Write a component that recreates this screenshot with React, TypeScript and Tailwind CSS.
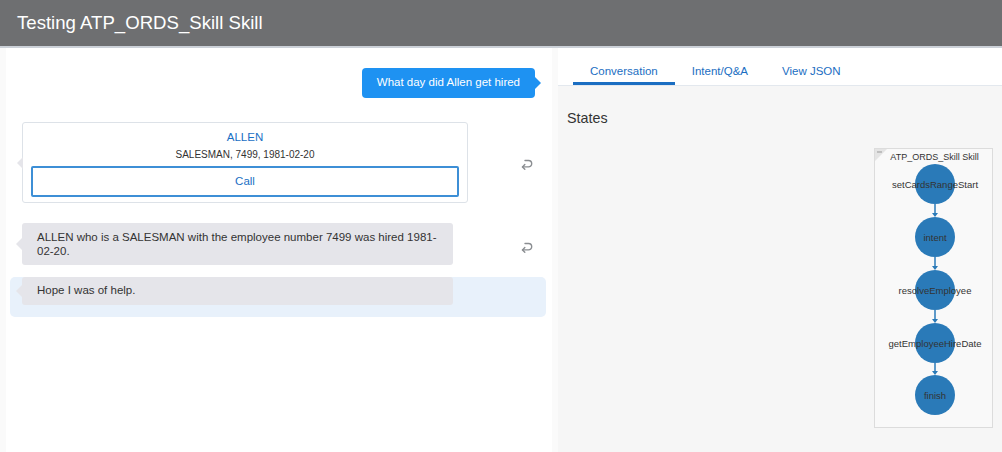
import React from "react";

function ReplayIcon() {
  return (
    <svg width="14" height="12" viewBox="0 0 14 12" fill="none" stroke="#8a8d91" strokeWidth="1.4" strokeLinecap="round" strokeLinejoin="round">
      <path d="M5 2.5 H8.5 A3.2 3.2 0 0 1 8.5 8.9 H2.5" />
      <path d="M4.8 6.6 L2.5 8.9 L4.8 11.2" />
    </svg>
  );
}

function LeftArrow({ color }: { color: string }) {
  return (
    <span
      className="absolute left-[-6px] top-1/2 -translate-y-1/2 w-0 h-0 border-y-[6px] border-y-transparent border-r-[6px]"
      style={{ borderRightColor: color }}
    />
  );
}

const nodes = ["setCardsRangeStart", "intent", "resolveEmployee", "getEmployeeHireDate", "finish"];
const ys = [35, 88, 141, 194, 246];

function Graph() {
  return (
    <div className="relative w-[119px] h-[280px] border border-[#dcdcdc] bg-[#f9f9f9]">
      <svg width="119" height="280" className="absolute left-0 top-0 overflow-visible">
        <path d="M0 0 H12 L0 12 Z" fill="#e4e4e4" />
        <line x1="2" y1="3" x2="7" y2="3" stroke="#999" strokeWidth="1" />
        <text x="59.5" y="11" textAnchor="middle" fontSize="9" fill="#333" fontFamily="'Liberation Sans', Arial, sans-serif">
          ATP_ORDS_Skill Skill
        </text>
        {ys.slice(0, -1).map((y, i) => (
          <g key={i}>
            <line x1="60" y1={y + 20} x2="60" y2={ys[i + 1] - 23} stroke="#2a7ab8" strokeWidth="1.5" />
            <path d={`M57 ${ys[i + 1] - 24} L63 ${ys[i + 1] - 24} L60 ${ys[i + 1] - 20} Z`} fill="#2a7ab8" />
          </g>
        ))}
        {nodes.map((n, i) => (
          <g key={n}>
            <circle cx="60" cy={ys[i]} r="20" fill="#2a7ab8" />
            <text x="60" y={ys[i] + 3.5} textAnchor="middle" fontSize="9.5" fill="#333" fontFamily="'Liberation Sans', Arial, sans-serif">
              {n}
            </text>
          </g>
        ))}
      </svg>
    </div>
  );
}

export default function App() {
  return (
    <div className="w-[1002px] h-[452px] flex flex-col overflow-hidden font-['Liberation_Sans',Arial,sans-serif] text-[#333]">
      <header className="h-[48px] shrink-0 bg-[#6e6f71] border-b-2 border-[#ccd1d8] flex items-center pl-[17px]">
        <h1 className="text-white text-[18.6px] leading-none">Testing ATP_ORDS_Skill Skill</h1>
      </header>
      <div className="flex flex-1 min-h-0">
        <div className="w-[6px] bg-[#fafafa]" />
        <div className="w-[546px] bg-white flex flex-col pt-[20px]">
          <div className="flex justify-end pr-[17px]">
            <div className="relative h-[30px] px-[15px] bg-[#1e92f2] rounded-[4px] text-white text-[11.5px] flex items-center">
              What day did Allen get hired
              <span className="absolute right-[-6px] top-1/2 -translate-y-1/2 w-0 h-0 border-y-[6px] border-y-transparent border-l-[6px] border-l-[#1e92f2]" />
            </div>
          </div>

          <div className="flex items-center pl-[16px] mt-[24px]">
            <div className="w-[447px]">
              <div className="relative w-[446px] h-[81px] border border-[#dde2e8] rounded-[3px] bg-white flex flex-col items-center px-[8px] pt-[7px]">
                <LeftArrow color="#e5e5ea" />
                <div className="text-[11.5px] text-[#1a6fc4] leading-[15px]">ALLEN</div>
                <div className="text-[10px] text-[#333] leading-[13px] mt-[3px]">SALESMAN, 7499, 1981-02-20</div>
                <button className="mt-[5px] w-full h-[31px] border-2 border-[#3d8fd6] rounded-[2px] text-[#1a6fc4] text-[11.5px] flex items-center justify-center">
                  Call
                </button>
              </div>
            </div>
            <div className="ml-[51px] mt-[3px]"><ReplayIcon /></div>
          </div>

          <div className="flex items-center pl-[16px] mt-[20px]">
            <div className="w-[447px]">
              <div className="relative w-[431px] h-[42px] bg-[#e5e5ea] rounded-[3px] pl-[15px] pr-[12px] flex items-center text-[11.5px] leading-[14px]">
                <LeftArrow color="#e5e5ea" />
                <span>ALLEN who is a SALESMAN with the employee number 7499 was hired 1981-02-20.</span>
              </div>
            </div>
            <div className="ml-[51px] mt-[6px]"><ReplayIcon /></div>
          </div>

          <div className="ml-[4px] mr-[6px] mt-[12px] h-[40px] bg-[#e8f1fb] rounded-[5px] pl-[12px]">
            <div className="relative w-[431px] h-[28px] bg-[#e5e5ea] rounded-[3px] pl-[15px] flex items-center text-[11.5px]">
              <LeftArrow color="#e5e5ea" />
              Hope I was of help.
            </div>
          </div>
        </div>
        <div className="w-[6px] bg-[#fafafa]" />
        <div className="flex-1 bg-[#f6f6f6] flex flex-col">
          <div className="h-[38px] bg-white border-b border-[#e3e8ee] flex items-end pl-[15px]">
            {["Conversation", "Intent/Q&A", "View JSON"].map((t, i) => (
              <div
                key={t}
                className={
                  i === 0
                    ? "h-full px-[17px] flex items-center pt-[14px] text-[11.5px] text-[#1b6ec2] border-b-[3px] border-[#1b6ec2]"
                    : "h-full px-[17px] flex items-center pt-[14px] text-[11.5px] text-[#1b6ec2] border-b-[3px] border-transparent"
                }
              >
                {t}
              </div>
            ))}
          </div>
          <div className="pl-[9px] mt-[23px] text-[14.3px] leading-[18px] text-[#333]">States</div>
          <div className="flex justify-end pr-[9px] mt-[21px]">
            <Graph />
          </div>
        </div>
      </div>
    </div>
  );
}
